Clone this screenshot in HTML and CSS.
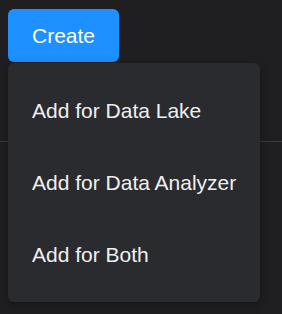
FILE: index.html
```html
<!DOCTYPE html>
<html>
<head>
<meta charset="utf-8">
<link rel="stylesheet" href="styles.css">
</head>
<body>
<div class="toolbar">
  <div class="dropdown">
    <button class="create-btn">Create</button>
    <ul class="menu">
      <li class="menu-item">Add for Data Lake</li>
      <li class="menu-item">Add for Data Analyzer</li>
      <li class="menu-item">Add for Both</li>
    </ul>
  </div>
</div>
</body>
</html>
```

FILE: styles.css
```css
html, body {
  margin: 0;
  padding: 0;
  background: #1f1f21;
  height: 100%;
  font-family: "Liberation Sans", Arial, sans-serif;
}
.toolbar {
  padding: 9px 8px 0;
  height: 132px;
  border-bottom: 1px solid #3b3b3d;
}
.dropdown {
  position: relative;
  display: inline-block;
}
.create-btn {
  display: block;
  width: 111px;
  height: 53px;
  border: none;
  border-radius: 6px;
  background: #1e90ff;
  color: #ffffff;
  font-family: inherit;
  font-size: 21px;
  padding: 0;
  margin: 0;
}
.menu {
  position: absolute;
  top: 54px;
  left: 0;
  width: 252px;
  margin: 0;
  padding: 12px 0 11px;
  list-style: none;
  background: #2a2b2f;
  border-radius: 6px;
  box-shadow: 0 3px 10px rgba(0, 0, 0, 0.35);
}
.menu-item {
  height: 72px;
  display: flex;
  align-items: center;
  padding-left: 24px;
  color: #f0f0f0;
  font-size: 21px;
}
```
